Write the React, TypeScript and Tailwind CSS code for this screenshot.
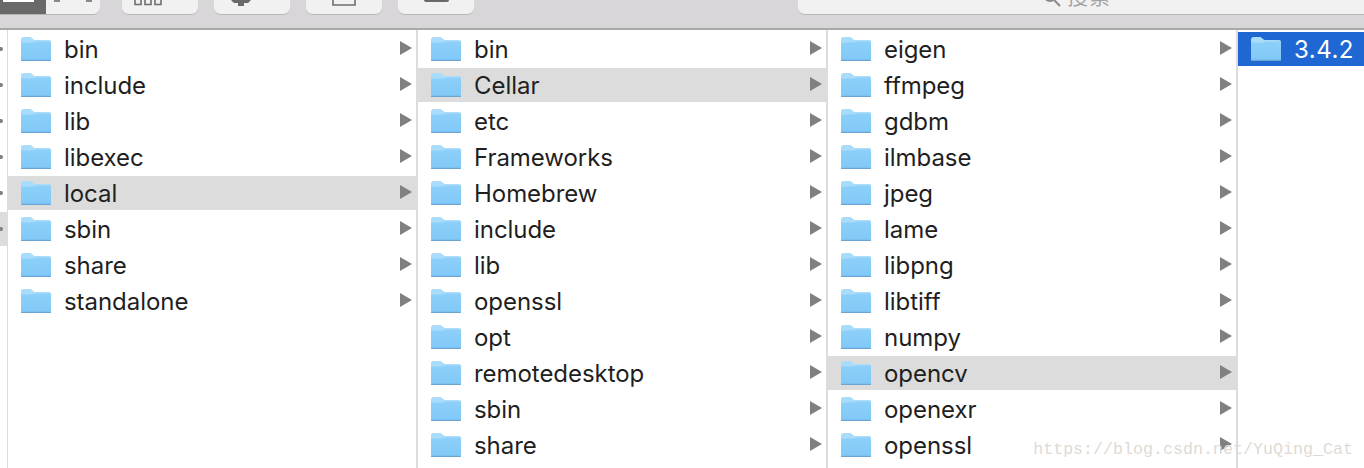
import { useId } from 'react';

const columns = [
  { items: ['bin', 'include', 'lib', 'libexec', 'local', 'sbin', 'share', 'standalone'], active: 'local' },
  {
    items: ['bin', 'Cellar', 'etc', 'Frameworks', 'Homebrew', 'include', 'lib', 'openssl', 'opt', 'remotedesktop', 'sbin', 'share'],
    active: 'Cellar',
  },
  {
    items: ['eigen', 'ffmpeg', 'gdbm', 'ilmbase', 'jpeg', 'lame', 'libpng', 'libtiff', 'numpy', 'opencv', 'openexr', 'openssl'],
    active: 'opencv',
  },
];

function FolderIcon() {
  const id = useId();
  return (
    <svg width="30" height="24" viewBox="0 0 30 24" className="shrink-0">
      <defs>
        <linearGradient id={id} x1="0" y1="0" x2="0" y2="1">
          <stop offset="0" stopColor="#8dd0f9" />
          <stop offset="1" stopColor="#7fc8f7" />
        </linearGradient>
      </defs>
      <path d="M0 2.5C0 1 1 0 2.5 0H8.5C10 0 10.5 .6 11.5 1.6C12.2 2.4 12.8 3 14 3H28C29.2 3 30 3.8 30 5V10H0Z" fill="#a9dcfa" />
      <path d="M0 5.5H12C13.5 5.5 14 5 15 4.6H28.5C29.4 4.6 30 5.2 30 6V22C30 23.2 29.2 24 28 24H2C.8 24 0 23.2 0 22Z" fill={`url(#${id})`} />
      <rect x="0" y="22.8" width="30" height="1.2" rx=".6" fill="#6ba6d2" />
    </svg>
  );
}

function Arrow() {
  return (
    <svg width="12" height="14" viewBox="0 0 12 14" className="mb-[2px] shrink-0">
      <path d="M0 0L12 7L0 14Z" fill="#808080" />
    </svg>
  );
}

function Row({ name, active }: { name: string; active: boolean }) {
  return (
    <div className={`flex h-[34px] shrink-0 items-center pl-[13px] pr-[4px] ${active ? 'bg-[#dcdcdc]' : ''}`}>
      <FolderIcon />
      <span className="ml-[13px] flex-1 pt-[1px] text-[24px] leading-none tracking-[-0.05px] text-[#1f1f1f]">{name}</span>
      <Arrow />
    </div>
  );
}

function ToolButton({ className, children }: { className: string; children: React.ReactNode }) {
  return (
    <div className={`flex h-[15px] w-[76px] overflow-hidden rounded-b-[7px] border-b border-[#b5b5b5] bg-[#f1f1f1] ${className}`}>
      {children}
    </div>
  );
}

export default function App() {
  return (
    <div className="relative flex h-[468px] w-[1364px] flex-col overflow-hidden bg-white font-['Inter',sans-serif]">
      {/* toolbar, cut off at the top of the shot */}
      <div className="flex h-[30px] shrink-0 items-start border-b-2 border-[#a8a8a8] bg-[#d8d6d8]">
        <div className="flex h-[15px] w-[100px] overflow-hidden rounded-br-[7px] border-b border-[#b5b5b5] bg-[#f1f1f1]">
          <div className="h-full w-[46px] bg-[#696969]">
            <div className="ml-[3px] h-[2px] w-[31px] bg-white" />
          </div>
          <div className="flex h-[2px] w-[54px] justify-between px-[8px] pt-0">
            <div className="h-[2px] w-[6px] bg-[#8a8a8a]" />
            <div className="h-[2px] w-[6px] bg-[#8a8a8a]" />
          </div>
        </div>
        <div className="ml-[22px]">
          <ToolButton className="pl-[11px]">
            <svg width="30" height="6" viewBox="0 0 30 6">
              <path d="M2 0V4.5H8V0M12 0V4.5H18V0M22 0V4.5H28V0" fill="none" stroke="#6e6e6e" strokeWidth="1.6" />
            </svg>
          </ToolButton>
        </div>
        <div className="ml-[16px]">
          <ToolButton className="pl-[16px]">
            <svg width="22" height="6" viewBox="0 0 22 6">
              <path d="M1 0H21L18 3H14V6H8V3H4Z" fill="#6a6a6a" />
            </svg>
          </ToolButton>
        </div>
        <div className="ml-[16px]">
          <ToolButton className="justify-center">
            <svg width="24" height="6" viewBox="0 0 24 6">
              <path d="M1 0V5H23V0" fill="none" stroke="#6e6e6e" strokeWidth="1.6" />
            </svg>
          </ToolButton>
        </div>
        <div className="ml-[16px]">
          <ToolButton className="justify-center">
            <div className="h-[2px] w-[25px] rounded-b-[2px] bg-[#6a6a6a]" />
          </ToolButton>
        </div>
        <div className="ml-[324px] flex h-[15px] flex-1 items-end overflow-hidden rounded-bl-[7px] border-b border-[#b5b5b5] bg-[#f1f1f1] pb-[8px] pl-[245px]">
          <svg width="20" height="16" viewBox="0 0 20 16" className="mb-[-2px] shrink-0">
            <circle cx="7" cy="3" r="6" fill="none" stroke="#8a8a8a" strokeWidth="1.8" />
            <path d="M11 8L17 14" stroke="#8a8a8a" strokeWidth="2" />
          </svg>
          <span className="ml-[4px] font-['Noto_Sans_CJK_SC',sans-serif] text-[21px] leading-none tracking-[1px] text-[#a3a3a3]">搜索</span>
        </div>
      </div>

      <div className="flex min-h-0 flex-1">
        {/* sliver of the previous column */}
        <div className="flex w-[8px] shrink-0 flex-col gap-[2px] border-r border-[#dcdcdc] pt-[2px]">
          {[0, 1, 2, 3, 4, 5, 6, 7].map((i) => (
            <div key={i} className={`flex h-[34px] shrink-0 items-center ${i === 5 ? 'bg-[#dcdcdc]' : ''}`}>
              {i < 6 && <div className="h-[4px] w-[3px] rounded-r-full bg-[#808080]" />}
            </div>
          ))}
        </div>

        {columns.map((col, i) => (
          <div key={i} className="flex w-[410px] shrink-0 flex-col gap-[2px] overflow-hidden border-r-2 border-[#dcdcdc] pt-[2px]">
            {col.items.map((name) => (
              <Row key={name} name={name} active={name === col.active} />
            ))}
          </div>
        ))}

        <div className="flex-1 pt-[2px]">
          <div className="flex h-[34px] items-center bg-[#1f68d3] pl-[13px]">
            <FolderIcon />
            <span className="ml-[13px] pt-[1px] text-[24px] leading-none tracking-[0.5px] text-white">3.4.2</span>
          </div>
        </div>
      </div>

      <div className="absolute bottom-[9px] right-[11px] font-['Liberation_Mono',monospace] text-[16.67px] leading-none text-[#dedad5]">
        https://blog.csdn.net/YuQing_Cat
      </div>
    </div>
  );
}
